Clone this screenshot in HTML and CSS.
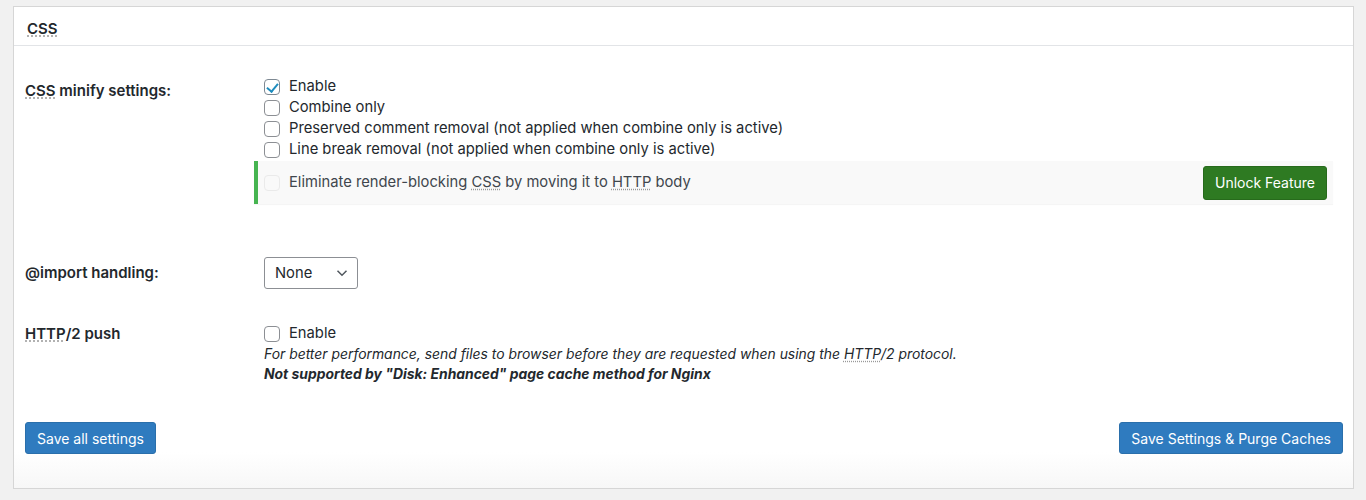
FILE: index.html
```html
<!DOCTYPE html>
<html lang="en">
<head>
    <meta charset="UTF-8">
    <meta name="viewport" content="width=device-width, initial-scale=1.0">
    <title>Minify settings</title>
    <link rel="stylesheet" href="styles.css">
</head>
<body>
    <div class="postbox">
        <div class="postbox-header">
            <h3><abbr title="Cascading Style Sheets">CSS</abbr></h3>
        </div>
        <div class="inside">
            <div class="row row-minify">
                <div class="th"><abbr title="Cascading Style Sheets">CSS</abbr> minify settings:</div>
                <div class="td">
                    <label class="check"><span class="box checked"></span><span>Enable</span></label>
                    <label class="check"><span class="box"></span><span>Combine only</span></label>
                    <label class="check"><span class="box"></span><span>Preserved comment removal (not applied when combine only is active)</span></label>
                    <label class="check"><span class="box"></span><span>Line break removal (not applied when combine only is active)</span></label>
                    <div class="pro-row">
                        <label class="check disabled"><span class="box"></span><span>Eliminate render-blocking <abbr title="Cascading Style Sheets">CSS</abbr> by moving it to <abbr title="Hypertext Transfer Protocol">HTTP</abbr> body</span></label>
                        <button class="btn-unlock">Unlock Feature</button>
                    </div>
                </div>
            </div>

            <div class="row row-import">
                <div class="th">@import handling:</div>
                <div class="td">
                    <div class="select">
                        <span>None</span>
                        <svg width="12" height="8" viewBox="0 0 12 8"><path d="M1.5 1.8 6 6.2l4.5-4.4" fill="none" stroke="#50575e" stroke-width="1.5"/></svg>
                    </div>
                </div>
            </div>

            <div class="row row-push">
                <div class="th"><abbr title="Hypertext Transfer Protocol">HTTP</abbr>/2 push</div>
                <div class="td">
                    <label class="check"><span class="box"></span><span>Enable</span></label>
                    <p class="description">For better performance, send files to browser before they are requested when using the <abbr title="Hypertext Transfer Protocol">HTTP</abbr>/2 protocol.</p>
                    <p class="description"><b>Not supported by "Disk: Enhanced" page cache method for Nginx</b></p>
                </div>
            </div>

            <div class="actions">
                <button class="btn-primary">Save all settings</button>
                <button class="btn-primary">Save Settings &amp; Purge Caches</button>
            </div>
        </div>
    </div>
</body>
</html>
```

FILE: styles.css
```css
* {
    margin: 0;
    padding: 0;
    box-sizing: border-box;
}

body {
    font-family: Inter, "Liberation Sans", sans-serif;
    font-size: 15px;
    color: #23282d;
    background-color: #f1f1f1;
    padding: 6px 12px 0 13px;
}

abbr {
    text-decoration: underline dotted #999;
    text-underline-offset: 2px;
}

.postbox {
    width: 1341px;
    height: 483px;
    background: linear-gradient(to bottom, #fff 445px, #f7f7f7 100%);
    border: 1px solid #d6d6d6;
}

.postbox-header {
    height: 39px;
    border-bottom: 1px solid #e2e4e7;
    padding: 0 13px;
    display: flex;
    align-items: center;
}

.postbox-header h3 {
    font-size: 15px;
    font-weight: 600;
    padding-top: 4px;
}

.inside {
    padding: 15px 10px 0 11px;
}

.row {
    display: grid;
    grid-template-columns: 229px 1fr;
}

.th {
    font-weight: 600;
    line-height: 21px;
}

.td {
    padding-left: 10px;
    font-size: 14.75px;
}

.row-minify .th {
    padding-top: 19px;
}

.row-minify .td {
    padding-top: 15px;
}

.row-import {
    margin-top: 53px;
}

.row-import .th {
    padding-top: 5px;
}

.row-push {
    margin-top: 34px;
}

.check {
    display: flex;
    align-items: center;
    gap: 9px;
    line-height: 21px;
}

.box {
    width: 16px;
    height: 16px;
    border: 1px solid #8c8f94;
    border-radius: 4px;
    background: #fff;
    flex-shrink: 0;
    position: relative;
}

.box.checked {
    border-color: #7e8993;
}

.box.checked::after {
    content: "";
    position: absolute;
    left: 4px;
    top: 1px;
    width: 5px;
    height: 9px;
    border: solid #1e8cbe;
    border-width: 0 2px 2px 0;
    transform: rotate(40deg);
}

.pro-row {
    display: flex;
    align-items: center;
    justify-content: space-between;
    height: 43px;
    margin: 1px 10px 0 -10px;
    padding: 0 6px 0 6px;
    background: #f9f9f9;
    border-left: 4px solid #46b450;
    box-shadow: 0 1px 1px rgba(0, 0, 0, 0.04);
}

.check.disabled {
    color: #40464d;
}

.check.disabled .box {
    border-color: #eaeaea;
    background: #f9f9f9;
}

.btn-unlock {
    font-family: inherit;
    font-size: 14px;
    color: #fff;
    background: #2e7a22;
    border: 1px solid #276a1c;
    border-radius: 3px;
    height: 34px;
    padding: 0 11px;
}

.select {
    width: 94px;
    height: 32px;
    border: 1px solid #8c8f94;
    border-radius: 3px;
    display: flex;
    align-items: center;
    justify-content: space-between;
    padding: 0 9px 0 10px;
}

.description {
    font-style: italic;
    font-size: 13.9px;
    line-height: 20px;
    color: #23282d;
}

.description b {
    font-weight: 700;
}

.actions {
    display: flex;
    justify-content: space-between;
    margin-top: 38px;
}

.btn-primary {
    font-family: inherit;
    font-size: 14px;
    color: #fff;
    background: #2f7bbf;
    border: 1px solid #2a6fab;
    border-radius: 3px;
    height: 32px;
    padding: 0 11px;
}
```
